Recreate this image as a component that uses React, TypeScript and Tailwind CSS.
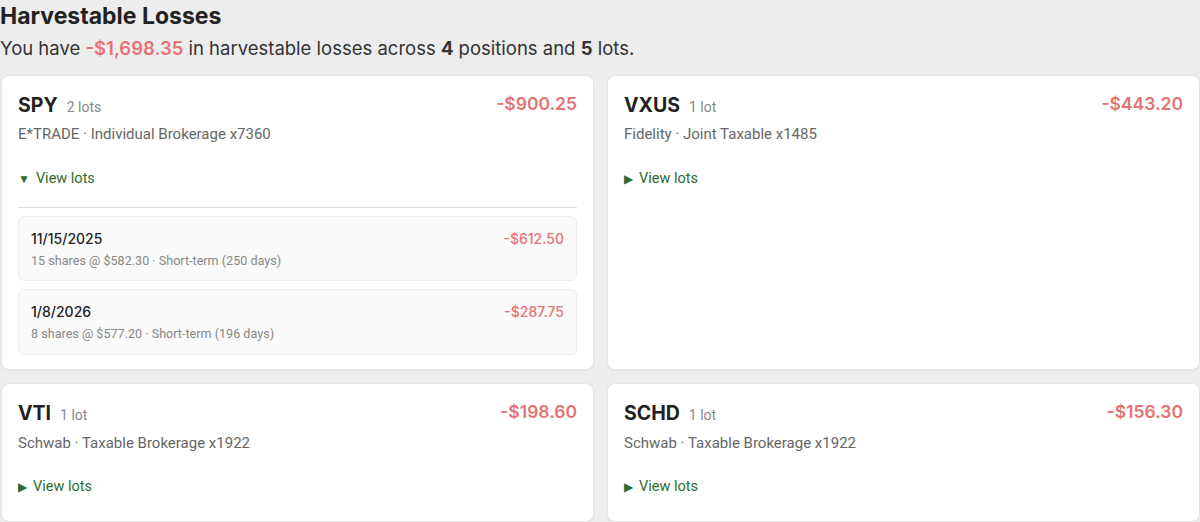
import React from "react"

type Lot = { date: string; detail: string; amount: string }

type Position = {
  ticker: string
  lots: string
  account: string
  amount: string
  open?: boolean
  lotRows?: Lot[]
}

const positions: Position[] = [
  {
    ticker: "SPY",
    lots: "2 lots",
    account: "E*TRADE · Individual Brokerage x7360",
    amount: "-$900.25",
    open: true,
    lotRows: [
      { date: "11/15/2025", detail: "15 shares @ $582.30 · Short-term (250 days)", amount: "-$612.50" },
      { date: "1/8/2026", detail: "8 shares @ $577.20 · Short-term (196 days)", amount: "-$287.75" },
    ],
  },
  { ticker: "VXUS", lots: "1 lot", account: "Fidelity · Joint Taxable x1485", amount: "-$443.20" },
  { ticker: "VTI", lots: "1 lot", account: "Schwab · Taxable Brokerage x1922", amount: "-$198.60" },
  { ticker: "SCHD", lots: "1 lot", account: "Schwab · Taxable Brokerage x1922", amount: "-$156.30" },
]

const inter = "font-['Inter',sans-serif]"
const roboto = "font-['Roboto',sans-serif]"

function PositionCard({ p }: { p: Position }) {
  return (
    <div className="rounded-lg border border-[#e4e4e4] bg-white px-4 pt-[15px] pb-[14px] shadow-[0_1px_2px_rgba(0,0,0,0.04)]">
      <div className="flex items-start justify-between">
        <div className="flex items-baseline gap-[9px]">
          <span className={`${inter} text-[19.5px] font-bold text-[#222]`}>{p.ticker}</span>
          <span className={`${roboto} text-[14px] text-[#888]`}>{p.lots}</span>
        </div>
        <span className={`${inter} text-[17.5px] font-semibold text-[#e57373]`}>{p.amount}</span>
      </div>
      <div className={`${roboto} mt-[3px] text-[15px] text-[#666]`}>{p.account}</div>
      <div
        className={`${roboto} mt-[22px] flex items-center gap-[6px] text-[14.5px] text-[#2f6b2f] ${
          p.open ? "" : "mb-[9px]"
        }`}
      >
        <span className="text-[12px]">{p.open ? "▼" : "▶"}</span>
        <span>View lots</span>
      </div>
      {p.open && p.lotRows && (
        <div className="mt-[17px] border-t border-[#ddd] pt-2">
          <div className="flex flex-col gap-2">
            {p.lotRows.map((l) => (
              <div
                key={l.date}
                className="flex items-start justify-between rounded-md border border-[#eee] bg-[#fafafa] px-3 pt-[11px] pb-[10px]"
              >
                <div>
                  <div className={`${inter} text-[14px] font-medium text-[#222]`}>{l.date}</div>
                  <div className={`${roboto} mt-[3px] text-[12.6px] text-[#888]`}>{l.detail}</div>
                </div>
                <span className={`${inter} text-[14px] font-medium text-[#e57373]`}>{l.amount}</span>
              </div>
            ))}
          </div>
        </div>
      )}
    </div>
  )
}

export default function App() {
  return (
    <div className={`${inter} min-h-[522px] bg-[#ededed]`}>
      <h1 className="pt-[1px] text-[23px] font-bold leading-[30px] text-[#222]">Harvestable Losses</h1>
      <p className="mt-[4px] text-[18.5px] leading-[26px] text-[#333]">
        You have <span className="font-semibold text-[#e57373]">-$1,698.35</span> in harvestable losses across{" "}
        <span className="font-bold">4</span> positions and <span className="font-bold">5</span> lots.
      </p>
      <div className="mt-[14px] ml-[1px] grid grid-cols-2 gap-[13px]">
        {positions.map((p) => (
          <PositionCard key={p.ticker} p={p} />
        ))}
      </div>
    </div>
  )
}
